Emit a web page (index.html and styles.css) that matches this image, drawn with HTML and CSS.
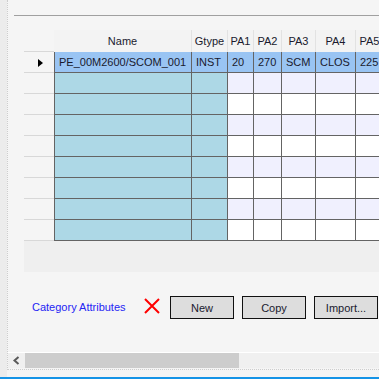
FILE: index.html
```html
<!DOCTYPE html>
<html lang="en">
<head>
    <meta charset="UTF-8">
    <meta name="viewport" content="width=device-width, initial-scale=1.0">
    <title>Category Attributes</title>
    <link rel="stylesheet" href="styles.css">
</head>
<body>
    <div class="frame">
        <div class="side"></div>
        <div class="right">
            <div class="panel">
                <div class="rule"></div>

                <div class="grid-wrap">
                    <table class="grid">
                        <colgroup>
                            <col class="w-head">
                            <col class="w-name">
                            <col class="w-gtype">
                            <col class="w-pa1">
                            <col class="w-pa2">
                            <col class="w-pa3">
                            <col class="w-pa4">
                            <col class="w-pa5">
                        </colgroup>
                        <thead>
                            <tr>
                                <th class="rowhead"></th>
                                <th>Name</th>
                                <th>Gtype</th>
                                <th>PA1</th>
                                <th>PA2</th>
                                <th>PA3</th>
                                <th>PA4</th>
                                <th>PA5</th>
                            </tr>
                        </thead>
                        <tbody>
                            <tr class="selected">
                                <td class="rowhead"><span class="pointer"></span></td>
                                <td class="key name">PE_00M2600/SCOM_001</td>
                                <td class="key">INST</td>
                                <td>20</td>
                                <td>270</td>
                                <td>SCM</td>
                                <td>CLOS</td>
                                <td>225</td>
                            </tr>
                            <tr class="alt">
                                <td class="rowhead"></td><td class="key name"></td><td class="key"></td>
                                <td></td><td></td><td></td><td></td><td></td>
                            </tr>
                            <tr>
                                <td class="rowhead"></td><td class="key name"></td><td class="key"></td>
                                <td></td><td></td><td></td><td></td><td></td>
                            </tr>
                            <tr class="alt">
                                <td class="rowhead"></td><td class="key name"></td><td class="key"></td>
                                <td></td><td></td><td></td><td></td><td></td>
                            </tr>
                            <tr>
                                <td class="rowhead"></td><td class="key name"></td><td class="key"></td>
                                <td></td><td></td><td></td><td></td><td></td>
                            </tr>
                            <tr class="alt">
                                <td class="rowhead"></td><td class="key name"></td><td class="key"></td>
                                <td></td><td></td><td></td><td></td><td></td>
                            </tr>
                            <tr>
                                <td class="rowhead"></td><td class="key name"></td><td class="key"></td>
                                <td></td><td></td><td></td><td></td><td></td>
                            </tr>
                            <tr class="alt">
                                <td class="rowhead"></td><td class="key name"></td><td class="key"></td>
                                <td></td><td></td><td></td><td></td><td></td>
                            </tr>
                            <tr>
                                <td class="rowhead"></td><td class="key name"></td><td class="key"></td>
                                <td></td><td></td><td></td><td></td><td></td>
                            </tr>
                        </tbody>
                    </table>
                </div>

                <div class="actions">
                    <a class="category-link" href="#">Category Attributes</a>
                    <svg class="delete-icon" width="16" height="16" viewBox="0 0 16 16">
                        <path d="M1 1 L15 15 M15 1 L1 15" stroke="#ff0000" stroke-width="2" fill="none"/>
                    </svg>
                    <button class="btn">New</button>
                    <button class="btn">Copy</button>
                    <button class="btn">Import...</button>
                </div>

                <div class="hscroll">
                    <div class="scroll-arrow">
                        <svg width="17" height="15" viewBox="0 0 17 15">
                            <polyline points="10.5,4 6.5,7.5 10.5,11" stroke="#5a5a5a" stroke-width="2" fill="none"/>
                        </svg>
                    </div>
                    <div class="scroll-thumb"></div>
                </div>
            </div>
            <div class="below"></div>
        </div>
    </div>
</body>
</html>
```

FILE: styles.css
```css
* {
    box-sizing: border-box;
}

body {
    margin: 0;
    padding: 0;
    background-color: #f4f4f4;
    font-family: "Liberation Sans", Arial, sans-serif;
    font-size: 11px;
    color: #1a1a2e;
    overflow: hidden;
}

.frame {
    display: flex;
    height: 379px;
    border-bottom: 2px solid #1593e6;
}

.side {
    width: 7px;
    background-color: #ececec;
}

.right {
    flex: 1;
    display: flex;
    flex-direction: column;
    min-width: 0;
}

.panel {
    height: 370px;
    display: flex;
    flex-direction: column;
    background-color: #f5f5f5;
    border-left: 1px dotted #cdcdcd;
    border-bottom: 1px dotted #cdcdcd;
    overflow: hidden;
}

.below {
    flex: 1;
    background-color: #f4f4f4;
}

.rule {
    margin: 15px 0 0 6px;
    height: 1px;
    background-color: #a0a0a0;
}

.grid-wrap {
    margin: 14px 0 0 16px;
    height: 242px;
    background-color: #efefef;
    overflow: hidden;
}

.grid {
    table-layout: fixed;
    border-collapse: separate;
    border-spacing: 0;
    width: 360px;
}

.w-head { width: 30px; }
.w-name { width: 138px; }
.w-gtype { width: 36px; }
.w-pa1 { width: 26px; }
.w-pa2 { width: 28px; }
.w-pa3 { width: 34px; }
.w-pa4 { width: 40px; }
.w-pa5 { width: 28px; }

.grid th {
    height: 22px;
    padding: 0 0 1px 0;
    font-weight: normal;
    text-align: center;
    white-space: nowrap;
    overflow: hidden;
    background-color: #f3f3f3;
    border-right: 1px solid #e2e2e2;
    color: #1a1a2e;
}

.grid th.rowhead {
    background-color: #f5f5f5;
    border-right: none;
    border-bottom: 1px solid #d8d8d8;
}

.grid td {
    height: 21px;
    padding: 0 0 0 4px;
    white-space: nowrap;
    overflow: hidden;
    background-color: #ffffff;
    border-right: 1px solid #646464;
    border-bottom: 1px solid #646464;
}

.grid td.name {
    border-left: 1px solid #646464;
}

.grid tr.alt td {
    background-color: #f0f0fe;
}

.grid td.key,
.grid tr.alt td.key {
    background-color: #add8e6;
}

.grid tr.selected td {
    background-color: #99c4f3;
}

.grid td.rowhead,
.grid tr.alt td.rowhead,
.grid tr.selected td.rowhead {
    background-color: #f5f5f5;
    border-right: none;
    border-bottom: 1px solid #d8d8d8;
    padding: 0;
    text-align: center;
}

.pointer {
    display: inline-block;
    width: 0;
    height: 0;
    margin-left: 2px;
    border-left: 5px solid #000000;
    border-top: 4px solid transparent;
    border-bottom: 4px solid transparent;
    vertical-align: middle;
}

.actions {
    display: flex;
    align-items: flex-start;
    height: 80px;
    padding: 24px 0 0 24px;
}

.category-link {
    flex-shrink: 0;
    width: 112px;
    line-height: 23px;
    color: #2424f4;
    text-decoration: none;
}

.delete-icon {
    flex-shrink: 0;
    margin: 2px 10px 0 0;
}

.btn {
    flex-shrink: 0;
    width: 64px;
    height: 23px;
    margin-right: 8px;
    padding: 0;
    font-family: "Liberation Sans", Arial, sans-serif;
    font-size: 11px;
    color: #1a1a2e;
    background-color: #dddddd;
    border: 1px solid #111111;
    border-radius: 0;
}

.btn:last-child {
    margin-right: 0;
}

.hscroll {
    display: flex;
    height: 16px;
    border-top: 1px solid #ffffff;
    background-color: #f0f0f0;
}

.scroll-arrow {
    width: 17px;
    height: 15px;
}

.scroll-arrow svg {
    display: block;
}

.scroll-thumb {
    width: 214px;
    height: 15px;
    background-color: #cdcdcd;
}
```
